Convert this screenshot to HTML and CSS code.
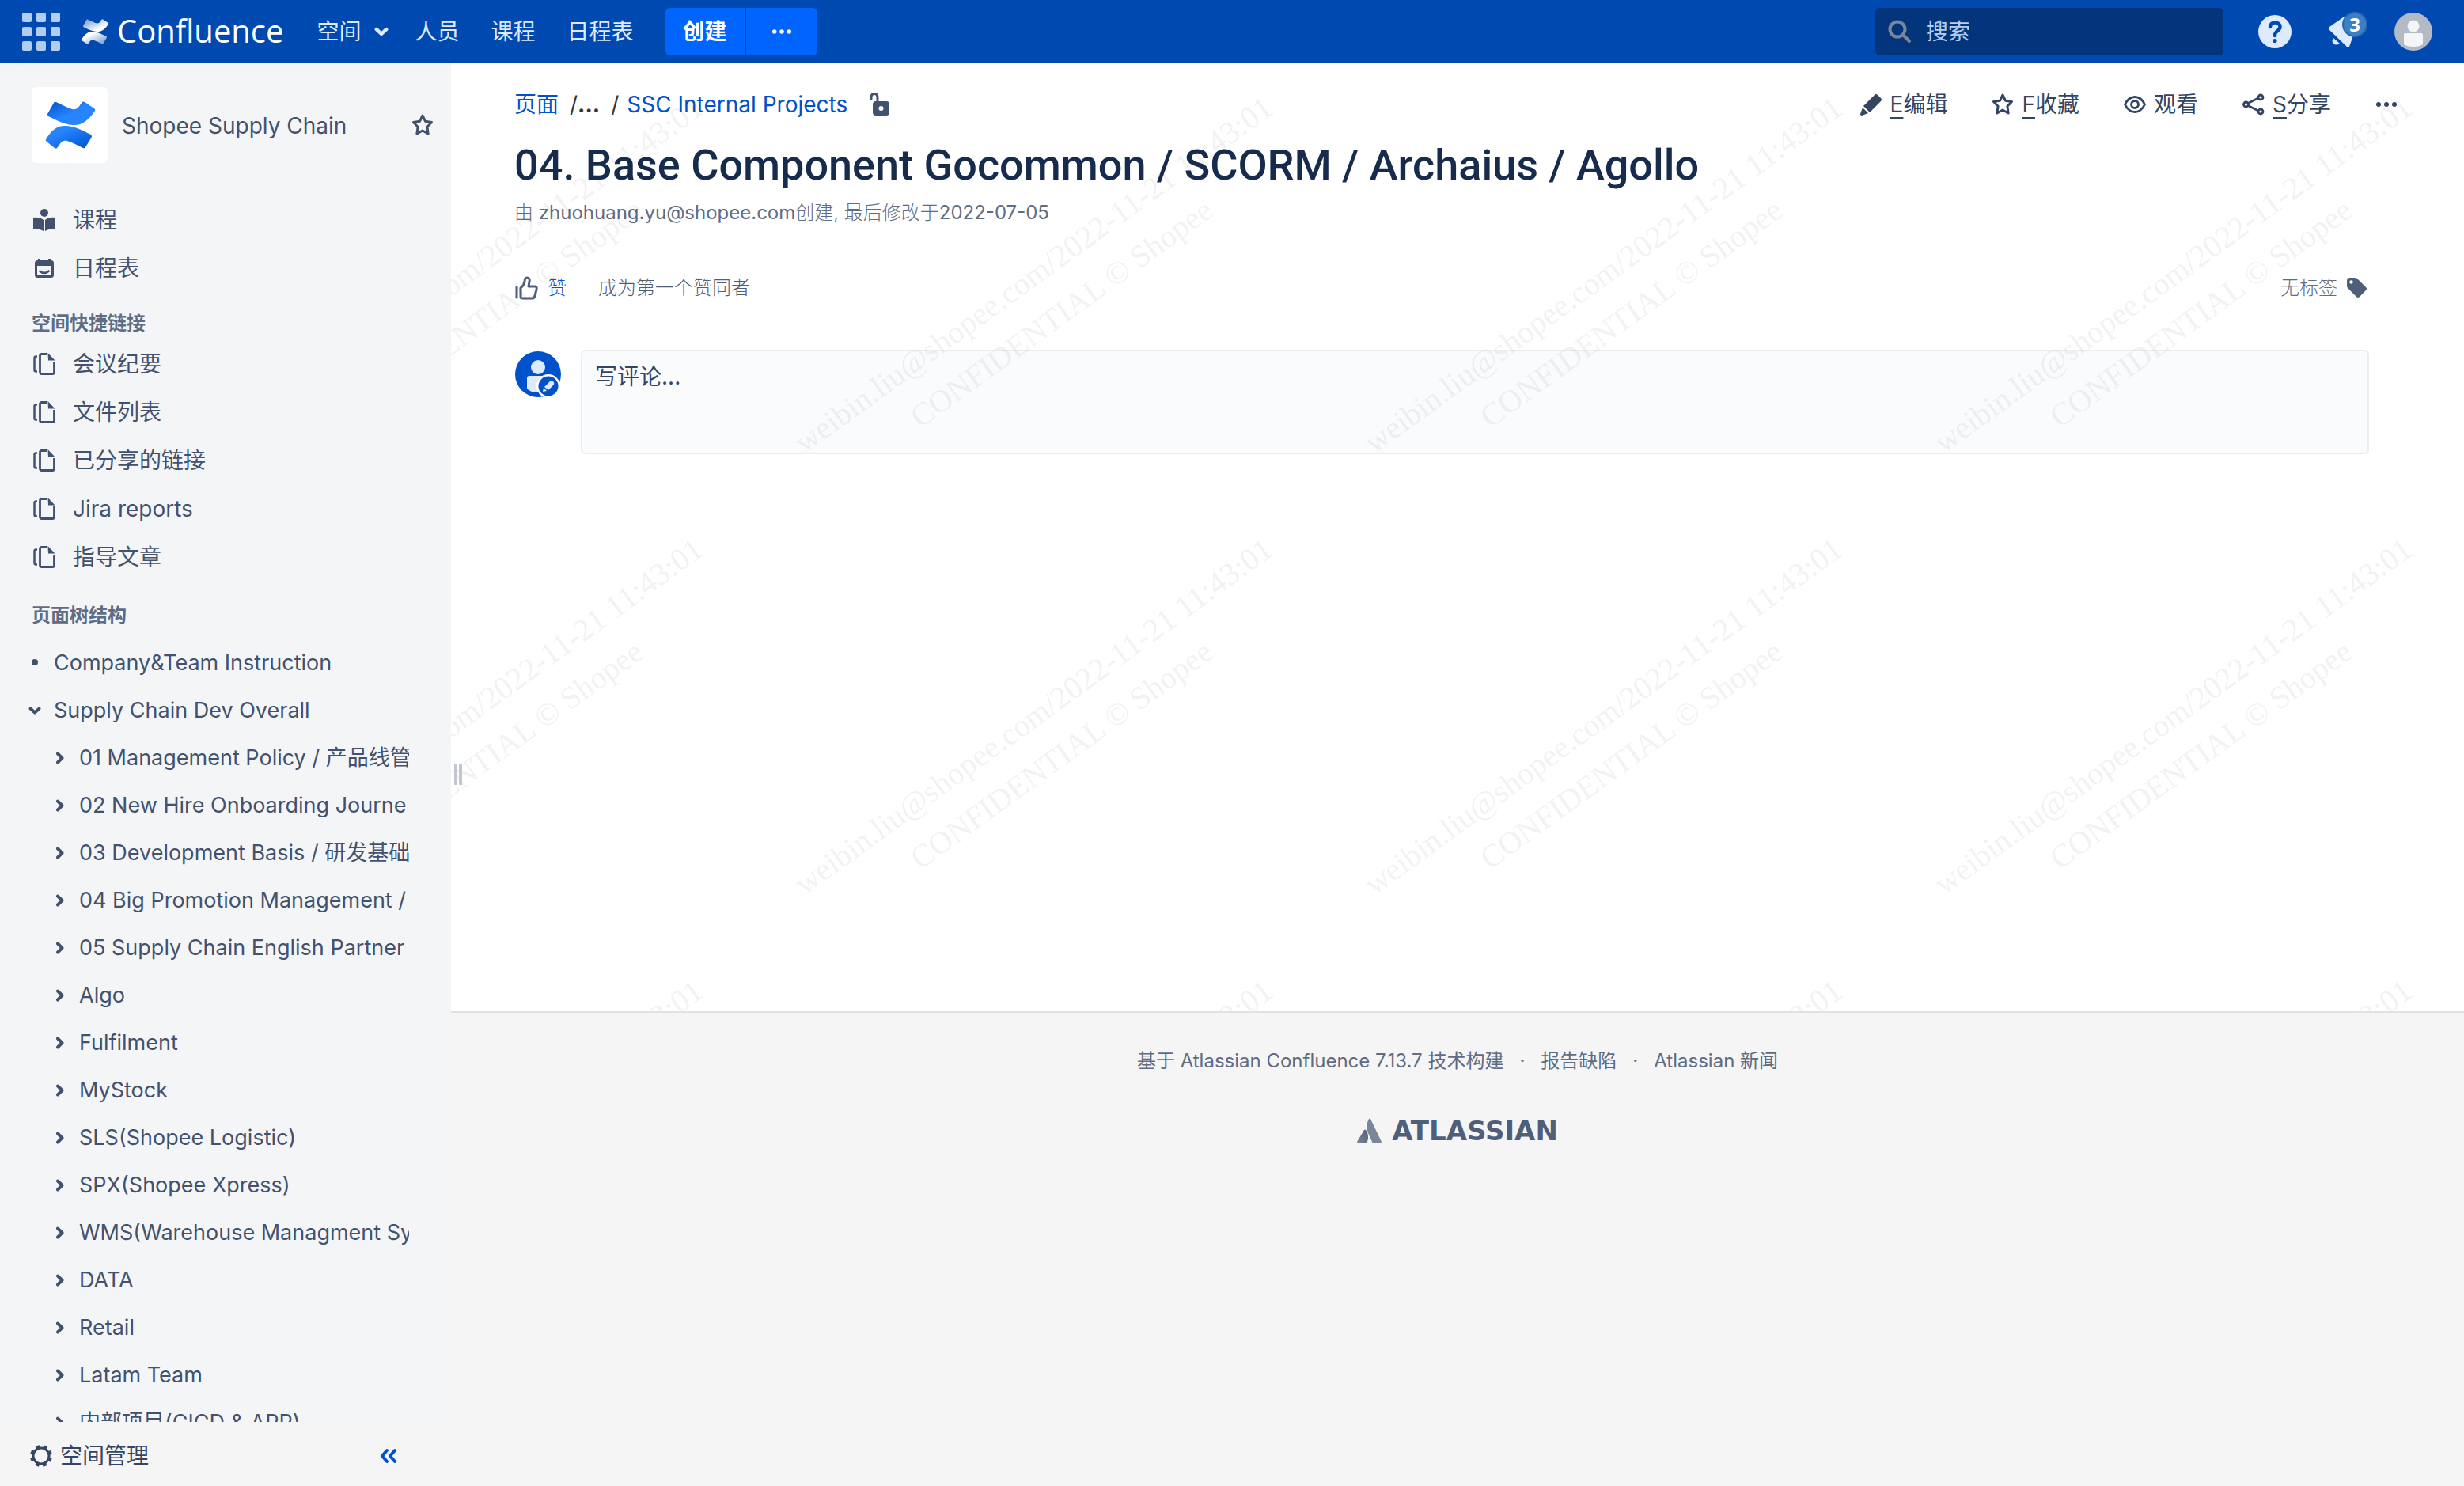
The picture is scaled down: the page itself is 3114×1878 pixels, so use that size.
FILE: index.html
```html
<!DOCTYPE html>
<html lang="zh-CN">
<head>
<meta charset="utf-8">
<title>04. Base Component Gocommon / SCORM / Archaius / Agollo - Confluence</title>
<link rel="stylesheet" href="styles.css">
</head>
<body>
<svg class="defs" width="0" height="0" aria-hidden="true">
  <defs>
    <linearGradient id="blue-a" x1="0" y1="0" x2="1" y2="1"><stop offset="0" stop-color="#0052cc"/><stop offset=".5" stop-color="#2684ff"/></linearGradient>
    <linearGradient id="blue-b" x1="1" y1="1" x2="0" y2="0"><stop offset="0" stop-color="#0052cc"/><stop offset=".7" stop-color="#2684ff"/></linearGradient>
    <linearGradient id="white-a" x1="0" y1="0" x2="1" y2="1"><stop offset="0" stop-color="#fff" stop-opacity=".4"/><stop offset=".7" stop-color="#fff"/></linearGradient>
    <linearGradient id="white-b" x1="1" y1="1" x2="0" y2="0"><stop offset="0" stop-color="#fff" stop-opacity=".4"/><stop offset=".7" stop-color="#fff"/></linearGradient>
    <linearGradient id="slate" x1="1" y1="0" x2="0" y2="1"><stop offset="0" stop-color="#505f79"/><stop offset="1" stop-color="#7a869a"/></linearGradient>
    <symbol id="i-chevron" viewBox="0 0 16 16"><path d="M5 2.500l5.500 5.500-5.500 5.500" fill="none" stroke="currentColor" stroke-width="4" stroke-linecap="round" stroke-linejoin="round"/></symbol>
    <symbol id="i-down" viewBox="0 0 16 16"><path d="M2.500 5.500l5.500 5 5.500-5" fill="none" stroke="currentColor" stroke-width="4" stroke-linecap="round" stroke-linejoin="round"/></symbol>
    <symbol id="i-star" viewBox="0 0 28 28"><path d="M14 2l3.500 7.300 8 1.200-5.600 5.700 1.200 8.800-7.100-4-7.100 4 1.200-8.800-5.600-5.700 8-1.200z" fill="none" stroke="currentColor" stroke-width="3" stroke-linejoin="round"/></symbol>
    <symbol id="i-pages" viewBox="0 0 28 28"><path d="M5 4.500H3.500a2 2 0 0 0-2 2v15a2 2 0 0 0 2 2H5" fill="none" stroke="currentColor" stroke-width="2.500"/><path d="M26.500 11v13.500a2 2 0 0 1-2 2h-14a2 2 0 0 1-2-2V3.500a2 2 0 0 1 2-2H18" fill="none" stroke="currentColor" stroke-width="2.800"/><path d="M18.500 0l9 9.500h-8.500z" fill="currentColor"/></symbol>
    <symbol id="i-dots" viewBox="0 0 28 28"><g fill="currentColor"><circle cx="4" cy="14" r="3"/><circle cx="14" cy="14" r="3"/><circle cx="24" cy="14" r="3"/></g></symbol>
  </defs>
</svg>

<header class="topbar">
  <button class="icon-btn" aria-label="应用"><svg width="48" height="48" viewBox="0 0 48 48" fill="#b3cdf0"><rect width="12" height="12" rx="2"/><rect x="18" width="12" height="12" rx="2"/><rect x="36" width="12" height="12" rx="2"/><rect y="18" width="12" height="12" rx="2"/><rect x="18" y="18" width="12" height="12" rx="2"/><rect x="36" y="18" width="12" height="12" rx="2"/><rect y="36" width="12" height="12" rx="2"/><rect x="18" y="36" width="12" height="12" rx="2"/><rect x="36" y="36" width="12" height="12" rx="2"/></svg></button>
  <a class="brand" href="#"><svg width="32" height="32" viewBox="0 0 60 60"><path d="M10 2q1-2 3-1c8 4 14 7 20 9 6 1 8-2 10-5l3-4q1-1 3 0l12 8q2 1 1 3C53 25 45 31 34 30 22 29 14 24 3 19q-1-1-1-3z" fill="url(#white-a)"/><path d="M50 58q-1 2-3 1c-8-4-14-7-20-9-6-1-8 2-10 5l-3 4q-1 1-3 0L-1 51q-2-1-1-3C7 35 15 29 26 30c12 1 20 6 31 11q1 1 1 3z" fill="url(#white-b)"/></svg><span>Confluence</span></a>
  <nav class="topnav">
    <a href="#">空间 <svg width="18" height="18"><use href="#i-down"/></svg></a>
    <a href="#">人员</a>
    <a href="#">课程</a>
    <a href="#">日程表</a>
  </nav>
  <div class="create"><button>创建</button><button class="more" aria-label="更多"><svg width="26" height="26"><use href="#i-dots"/></svg></button></div>
  <label class="search"><svg width="30" height="30" viewBox="0 0 30 30" fill="none" stroke="#7a869a" stroke-width="4" stroke-linecap="round"><circle cx="12" cy="12" r="9.500"/><path d="M19 19l8 8"/></svg><input type="search" placeholder="搜索" aria-label="搜索"></label>
  <div class="tools">
    <button class="icon-btn" aria-label="帮助"><svg width="42" height="42" viewBox="0 0 42 42"><circle cx="21" cy="21" r="21" fill="#deebff"/><path d="M15 15c0-7.500 12.500-7.500 12.500 0 0 5.500-6.500 4-6.500 11" fill="none" stroke="#0049b0" stroke-width="4.500" stroke-linecap="round"/><circle cx="21" cy="32.500" r="2.600" fill="#0049b0"/></svg></button>
    <button class="icon-btn bell" aria-label="通知"><svg width="42" height="42" viewBox="0 0 42 42" fill="#deebff"><path d="M3 18q-1-2 1-3L24 1l10 25-5 14q-1 2-2 1z"/><path d="M9 29l8 7q-5 3-8 0-3-3 0-7z"/></svg><span class="badge">3</span></button>
    <button class="icon-btn" aria-label="用户"><svg width="48" height="48" viewBox="0 0 48 48"><circle cx="24" cy="24" r="24" fill="#b3bac5"/><circle cx="24" cy="17" r="7.500" fill="#f4f5f7"/><path d="M12 28q0-2 2-2h20q2 0 2 2v12q-4 3-12 3t-12-3z" fill="#f4f5f7"/></svg></button>
  </div>
</header>

<div class="layout">
  <aside class="sidebar">
    <div class="scroll">
      <div class="space">
        <a class="space-logo" href="#" aria-label="Shopee Supply Chain"><svg width="60" height="60" viewBox="0 0 60 60"><path d="M10 2q1-2 3-1c8 4 14 7 20 9 6 1 8-2 10-5l3-4q1-1 3 0l12 8q2 1 1 3C53 25 45 31 34 30 22 29 14 24 3 19q-1-1-1-3z" fill="url(#blue-a)"/><path d="M50 58q-1 2-3 1c-8-4-14-7-20-9-6-1-8 2-10 5l-3 4q-1 1-3 0L1 51q-2-1-1-3C7 36 15 30 26 31c12 1 20 6 31 11q1 1 1 3z" fill="url(#blue-b)"/></svg></a>
        <a class="space-name" href="#">Shopee Supply Chain</a>
        <button class="icon-btn" aria-label="收藏空间"><svg width="28" height="28"><use href="#i-star"/></svg></button>
      </div>
      <ul class="links">
        <li><a href="#"><svg width="28" height="28" viewBox="0 0 28 28" fill="currentColor"><circle cx="14" cy="5" r="5"/><path d="M0 11q8-1 13 3v14q-5-3-13-3zM28 11q-8-1-13 3v14q5-3 13-3z"/></svg>课程</a></li>
        <li><a href="#"><svg width="28" height="28" viewBox="0 0 28 28"><rect x="3.500" y="5.500" width="21" height="19" rx="2" fill="none" stroke="currentColor" stroke-width="3"/><path d="M3 5h22v6H3zM6 2h3v4H6zM19 2h3v4h-3z" fill="currentColor"/><path d="M7.500 17q6.500 6 13 0" fill="none" stroke="currentColor" stroke-width="2.500"/></svg>日程表</a></li>
      </ul>
      <h2 class="section">空间快捷链接</h2>
      <ul class="links">
        <li><a href="#"><svg width="28" height="28"><use href="#i-pages"/></svg>会议纪要</a></li>
        <li><a href="#"><svg width="28" height="28"><use href="#i-pages"/></svg>文件列表</a></li>
        <li><a href="#"><svg width="28" height="28"><use href="#i-pages"/></svg>已分享的链接</a></li>
        <li><a href="#"><svg width="28" height="28"><use href="#i-pages"/></svg>Jira reports</a></li>
        <li><a href="#"><svg width="28" height="28"><use href="#i-pages"/></svg>指导文章</a></li>
      </ul>
      <h2 class="section tree-title">页面树结构</h2>
      <ul class="tree">
        <li><a href="#"><svg width="16" height="16"><circle cx="8" cy="7" r="4" fill="currentColor"/></svg>Company&amp;Team Instruction</a></li>
        <li><a href="#"><svg width="16" height="16"><use href="#i-down"/></svg>Supply Chain Dev Overall</a>
          <ul>
            <li><a href="#"><svg width="16" height="16"><use href="#i-chevron"/></svg>01 Management Policy / 产品线管</a></li>
            <li><a href="#"><svg width="16" height="16"><use href="#i-chevron"/></svg>02 New Hire Onboarding Journe</a></li>
            <li><a href="#"><svg width="16" height="16"><use href="#i-chevron"/></svg>03 Development Basis / 研发基础</a></li>
            <li><a href="#"><svg width="16" height="16"><use href="#i-chevron"/></svg>04 Big Promotion Management /</a></li>
            <li><a href="#"><svg width="16" height="16"><use href="#i-chevron"/></svg>05 Supply Chain English Partner</a></li>
            <li><a href="#"><svg width="16" height="16"><use href="#i-chevron"/></svg>Algo</a></li>
            <li><a href="#"><svg width="16" height="16"><use href="#i-chevron"/></svg>Fulfilment</a></li>
            <li><a href="#"><svg width="16" height="16"><use href="#i-chevron"/></svg>MyStock</a></li>
            <li><a href="#"><svg width="16" height="16"><use href="#i-chevron"/></svg>SLS(Shopee Logistic)</a></li>
            <li><a href="#"><svg width="16" height="16"><use href="#i-chevron"/></svg>SPX(Shopee Xpress)</a></li>
            <li><a href="#"><svg width="16" height="16"><use href="#i-chevron"/></svg>WMS(Warehouse Managment Sy</a></li>
            <li><a href="#"><svg width="16" height="16"><use href="#i-chevron"/></svg>DATA</a></li>
            <li><a href="#"><svg width="16" height="16"><use href="#i-chevron"/></svg>Retail</a></li>
            <li><a href="#"><svg width="16" height="16"><use href="#i-chevron"/></svg>Latam Team</a></li>
            <li><a href="#"><svg width="16" height="16"><use href="#i-chevron"/></svg>内部项目(CICD &amp; APP)</a></li>
          </ul>
        </li>
      </ul>
    </div>
    <div class="admin">
      <button class="admin-btn"><svg width="28" height="28" viewBox="0 0 28 28" fill="none" stroke="currentColor"><circle cx="14" cy="14" r="10" stroke-width="3"/><circle cx="14" cy="14" r="12.500" stroke-width="3" stroke-dasharray="4.900 4.917" stroke-dashoffset="7.300"/></svg>空间管理</button>
      <button class="icon-btn collapse" aria-label="折叠侧边栏"><svg width="22" height="20" viewBox="0 0 22 20" fill="none" stroke="currentColor" stroke-width="4" stroke-linecap="round" stroke-linejoin="round"><path d="M9 3l-6 7 6 7M19 3l-6 7 6 7"/></svg></button>
    </div>
  </aside>

  <div class="page">
    <main class="content">
      <div class="head">
        <nav class="crumbs" aria-label="位置"><a href="#">页面</a><span class="gap">/</span><button aria-label="显示全部">...</button><span class="gap2">/</span><a href="#">SSC Internal Projects</a><svg width="26" height="30" viewBox="0 0 26 30"><path d="M2 8V6q0-4.500 4-4.500T10 6v6" fill="none" stroke="#42526e" stroke-width="3" stroke-linecap="round"/><rect x="4" y="11" width="21" height="18" rx="4" fill="#42526e"/><circle cx="14.500" cy="20" r="3" fill="#fff"/></svg></nav>
        <div class="actions">
          <button><svg width="28" height="28" viewBox="0 0 28 28" fill="currentColor"><path d="M18 2q2-2 4 0l4 4q2 2 0 4L12 24l-8-8zM3 18l7 7-8 3q-2 0-2-2z"/></svg><span><u>E</u>编辑</span></button>
          <button><svg width="28" height="28"><use href="#i-star"/></svg><span><u>F</u>收藏</span></button>
          <button><svg width="28" height="28" viewBox="0 0 28 28" fill="none" stroke="currentColor" stroke-width="2.800"><path d="M1.500 14Q6 4.500 14 4.500T26.500 14Q22 23.500 14 23.500T1.500 14z"/><circle cx="14" cy="14" r="4.500"/></svg><span>观看</span></button>
          <button><svg width="28" height="28" viewBox="0 0 28 28" fill="none" stroke="currentColor" stroke-width="2.800"><circle cx="4.500" cy="14" r="3"/><circle cx="23" cy="5" r="3"/><circle cx="23" cy="23" r="3"/><path d="M7 12.500L20 6M7 15.500L20 22"/></svg><span><u>S</u>分享</span></button>
          <button aria-label="更多操作"><svg width="28" height="28"><use href="#i-dots"/></svg></button>
        </div>
      </div>
      <h1>04. Base Component Gocommon / SCORM / Archaius / Agollo</h1>
      <p class="meta">由 <a href="#">zhuohuang.yu@shopee.com</a>创建, 最后修改于<a href="#">2022-07-05</a></p>
      <div class="social">
        <button class="like"><svg width="30" height="30" viewBox="0 0 30 30" fill="none" stroke="#505f79" stroke-width="3" stroke-linejoin="round" stroke-linecap="round"><path d="M3 14v13M8 15q4-3 5-8 0-5 3-5 4 0 3 5l-1 6h8q3 0 2 4l-2 8q-1 3-3 3H10q-2 0-2-2z"/></svg>赞</button>
        <span class="first">成为第一个赞同者</span>
        <span class="labels">无标签 <svg width="28" height="28" viewBox="0 0 28 28"><path d="M2 5q0-4 4-4h6q2 0 3 1l11 11q2 2 0 4l-8 8q-2 2-4 0L3 14q-1-1-1-3z" fill="#505f79"/><circle cx="7.500" cy="6.500" r="2.200" fill="#fff"/></svg></span>
      </div>
      <div class="comment">
        <svg width="60" height="60" viewBox="0 0 60 60"><circle cx="30" cy="30" r="29" fill="#0052cc"/><circle cx="30" cy="21" r="9" fill="#deebff"/><path d="M16 35q0-3 3-3h23q3 0 3 3v13q-5 5-15 5t-14-5z" fill="#deebff"/><circle cx="43" cy="45" r="15" fill="#fff"/><circle cx="43" cy="45" r="12.500" fill="#0052cc"/><path d="M45 39q2-2 4 0t1 4l-7 7-5-4zM37 47l4 4-5 1z" fill="#deebff"/></svg>
        <textarea aria-label="写评论" placeholder="写评论..."></textarea>
      </div>
      <svg class="watermark" aria-hidden="true" width="100%" height="100%">
        <defs><pattern id="wm" x="-330" y="0" width="720" height="558" patternUnits="userSpaceOnUse"><g transform="translate(354 278) rotate(-36)"><text class="wm-text" x="0" y="0" text-anchor="middle">weibin.liu@shopee.com/2022-11-21 11:43:01</text><text class="wm-text" x="0" y="60" text-anchor="middle">CONFIDENTIAL © Shopee</text></g></pattern></defs>
        <rect width="100%" height="100%" fill="url(#wm)"/>
      </svg>
      <div class="grip"></div>
    </main>
    <footer class="footer">
      <ul><li>基于 <a href="#">Atlassian Confluence</a> 7.13.7 技术构建</li><li><a href="#">报告缺陷</a></li><li><a href="#">Atlassian 新闻</a></li></ul>
      <a class="atlassian" href="#"><svg width="32" height="32" viewBox="0 0 32 32"><path d="M9 15q1-1 2 0 5 7 2 15-1 1-2 1H1q-1 0-1-1z" fill="url(#slate)"/><path d="M15 1q1-1 2 0l14 29q0 1-1 1H20q-1 0-1-1L14 19q-4-9 1-18z" fill="#7a869a"/></svg><span>ATLASSIAN</span></a>
    </footer>
  </div>
</div>
</body>
</html>
```
FILE: styles.css
```css
* { box-sizing: border-box; }
body {
  margin: 0;
  height: 100vh;
  display: flex;
  flex-direction: column;
  overflow: hidden;
  background: #f5f5f5;
  color: #172b4d;
  font: 28px/40px Inter, "Noto Sans CJK SC", sans-serif;
}
a { color: inherit; text-decoration: none; }
ul { list-style: none; margin: 0; padding: 0; }
svg { flex: none; display: block; overflow: visible; }
button {
  border: 0;
  padding: 0;
  background: none;
  color: inherit;
  font: inherit;
  cursor: pointer;
}
.defs { position: absolute; }
.icon-btn { display: block; }

/* Top bar */
.topbar {
  flex: none;
  height: 80px;
  padding: 0 40px 0 28px;
  display: flex;
  align-items: center;
  background: #0049b0;
  color: #deebff;
}
.brand { display: flex; align-items: center; gap: 12px; margin-left: 28px; color: #fff; font: 40px/48px "Open Sans", sans-serif; }
.brand span { padding-bottom: 2px; }
.topnav { display: flex; gap: 40px; margin-left: 42px; }
.topnav a { display: flex; align-items: center; gap: 16px; }
.topnav a:first-child { margin-right: -6px; }
.create { display: flex; gap: 2px; margin-left: 40px; }
.create button { width: 100px; height: 60px; background: #0065ff; color: #fff; font-weight: 700; border-radius: 6px 0 0 6px; }
.create .more { width: 90px; display: grid; place-items: center; border-radius: 0 6px 6px 0; }
.search { display: flex; align-items: center; gap: 18px; width: 440px; height: 60px; margin-left: auto; padding: 0 16px; background: #04357c; border-radius: 6px; }
.search input { flex: 1; min-width: 0; border: 0; padding: 0; background: none; color: #b3cdf0; font: inherit; outline: 0; }
.search input::placeholder { color: #b3cdf0; opacity: 1; }
.tools { display: flex; align-items: center; gap: 44px; margin-left: 44px; }
.bell { position: relative; }
.badge {
  position: absolute;
  right: -10px;
  top: -4px;
  width: 32px;
  height: 32px;
  border: 2px solid #2a67ae;
  border-radius: 16px;
  background: #3b7fc4;
  color: #fff;
  font: 700 24px/28px "Open Sans", sans-serif;
}

/* Sidebar */
.layout { flex: 1; min-height: 0; display: flex; }
.sidebar { flex: none; width: 570px; display: flex; flex-direction: column; color: #42526e; }
.scroll { flex: 1; min-height: 0; overflow: hidden; padding: 30px 22px 0 40px; background: #f4f5f7; }
.space { display: flex; align-items: center; margin-bottom: 41px; }
.space-logo { display: grid; place-items: center; width: 96px; height: 96px; background: #fff; border-radius: 6px; }
.space-name { flex: 1; margin-left: 18px; padding-top: 2px; }
.links a { display: flex; align-items: center; gap: 22px; height: 61px; padding-left: 2px; }
.section { margin: 22px 0 2px; font-size: 24px; line-height: 36px; font-weight: 700; color: #5e6c84; }
.tree-title { margin: 26px 0 12px; }
.tree { margin-left: -4px; width: 481px; overflow: hidden; font-size: 27px; }
.tree ul { margin-left: 32px; }
.tree a { display: flex; align-items: center; gap: 16px; height: 60px; white-space: nowrap; }
.admin { flex: none; display: flex; align-items: center; height: 81px; padding: 4px 68px 0 38px; color: #344563; }
.admin-btn { display: flex; align-items: center; gap: 10px; margin-right: auto; }
.collapse { color: #0052cc; }

/* Page */
.page { flex: 1; min-width: 0; }
.content {
  position: relative;
  min-height: 1200px;
  overflow: hidden;
  padding: 31px 120px 0 80px;
  background: #fff;
  border-bottom: 2px solid #dfe1e6;
}
.head { display: flex; align-items: center; justify-content: space-between; height: 42px; margin-right: -36px; }
.crumbs { display: flex; align-items: center; color: #333; }
.crumbs a { color: #0052cc; }
.crumbs .gap { margin-left: 14px; }
.crumbs .gap2 { margin: 0 10px 0 14px; }
.crumbs svg { margin-left: 28px; }
.crumbs button { font-weight: 700; }
.actions { display: flex; align-items: center; gap: 56px; color: #344563; }
.actions button { display: flex; align-items: center; gap: 10px; }
.actions u { text-underline-offset: 6px; text-decoration-thickness: 2px; }
h1 { margin: 24px 0 0; font: 500 54px/64px Roboto, sans-serif; }
.meta { margin: 10px 0 0; font-size: 24px; line-height: 36px; color: #5e6c84; font-weight: 300; }
.meta a { font-weight: 400; }
.social { display: flex; align-items: center; height: 40px; margin-top: 57px; font-size: 24px; font-weight: 300; color: #505f79; }
.like { display: flex; align-items: center; gap: 12px; color: #0052cc; }
.first { margin-left: 40px; }
.labels { display: flex; align-items: center; gap: 10px; margin: 0 2px 0 auto; color: #5e6c84; }
.comment { display: flex; align-items: flex-start; gap: 24px; margin-top: 58px; }
.comment svg { margin-top: 1px; }
textarea {
  flex: 1;
  height: 132px;
  padding: 12px 16px;
  border: 2px solid #ebecf0;
  border-radius: 6px;
  background: #fafbfc;
  font: inherit;
  resize: none;
}
textarea::placeholder { color: #344563; opacity: 1; }
.watermark { position: absolute; left: 0; top: 0; pointer-events: none; }
.wm-text { font: 40px "Liberation Serif", serif; fill: #000; fill-opacity: .05; }
.grip { position: absolute; left: 4px; top: 886px; width: 10px; height: 26px; border: solid #c1c7d0; border-width: 0 4px; }

/* Footer */
.footer { display: flex; flex-direction: column; align-items: center; padding-top: 43px; color: #5e6c84; font-size: 24px; line-height: 36px; }
.footer ul { display: flex; }
.footer li + li::before { content: "·"; margin: 0 20px; }
.atlassian { display: flex; align-items: center; gap: 12px; margin-top: 49px; color: #505f79; font: 700 34px/42px "DejaVu Sans", sans-serif; }
```
